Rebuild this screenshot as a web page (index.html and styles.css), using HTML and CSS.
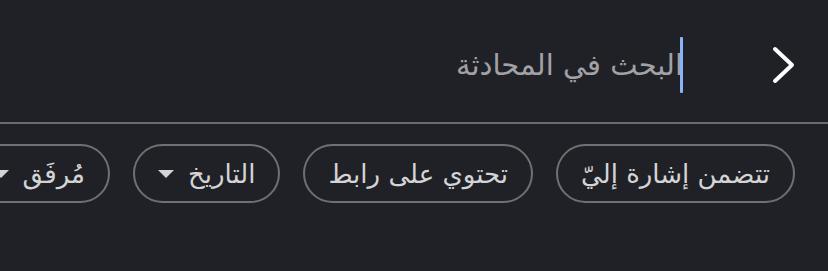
FILE: index.html
```html
<!DOCTYPE html>
<html lang="ar" dir="rtl">
<head>
<meta charset="utf-8">
<link rel="stylesheet" href="styles.css">
</head>
<body>
<div class="screen">
  <header class="search-bar">
    <button class="back" aria-label="رجوع">
      <svg width="26" height="40" viewBox="0 0 26 40"><path d="M4 4 L21 20 L4 36" fill="none" stroke="#ffffff" stroke-width="4" stroke-linecap="round" stroke-linejoin="round"/></svg>
    </button>
    <div class="field">
      <span class="placeholder">البحث في المحادثة</span>
      <span class="caret"></span>
    </div>
  </header>
  <div class="chips">
    <span class="chip">تتضمن إشارة إليّ</span>
    <span class="chip">تحتوي على رابط</span>
    <span class="chip">التاريخ<i class="tri"></i></span>
    <span class="chip">مُرفَق<i class="tri"></i></span>
  </div>
</div>
</body>
</html>
```
FILE: styles.css
```css
* { box-sizing: border-box; }
html, body { margin: 0; padding: 0; background: #202126; }
body { font-family: "DejaVu Sans", "Noto Sans", sans-serif; width: 828px; height: 271px; overflow: hidden; }
.screen { width: 828px; height: 271px; background: #202126; }
.search-bar {
  height: 124px;
  padding: 8px 31px 0 0;
  display: flex;
  align-items: center;
  gap: 88px;
  border-bottom: 2px solid #6b6b6f;
}
.back { background: none; border: 0; padding: 0; width: 26px; height: 40px; display: flex; }
.field { position: relative; display: flex; align-items: center; height: 56px; }
.placeholder { color: #a2a2a6; font-size: 29px; line-height: 56px; white-space: nowrap; }
.caret { position: absolute; right: 0; top: 0; width: 3px; height: 56px; background: #8ab4f8; border-radius: 1px; }
.chips {
  display: flex;
  gap: 23px;
  padding: 20px 33px 0 0;
  white-space: nowrap;
  overflow: hidden;
}
.chip {
  flex: none;
  display: flex;
  align-items: center;
  gap: 14px;
  height: 59px;
  padding: 0 23px;
  border: 2px solid #707074;
  border-radius: 30px;
  color: #d4d4d6;
  font-size: 26px;
}
.tri {
  width: 0; height: 0;
  border-left: 8px solid transparent;
  border-right: 8px solid transparent;
  border-top: 8px solid #d4d4d6;
}
```
